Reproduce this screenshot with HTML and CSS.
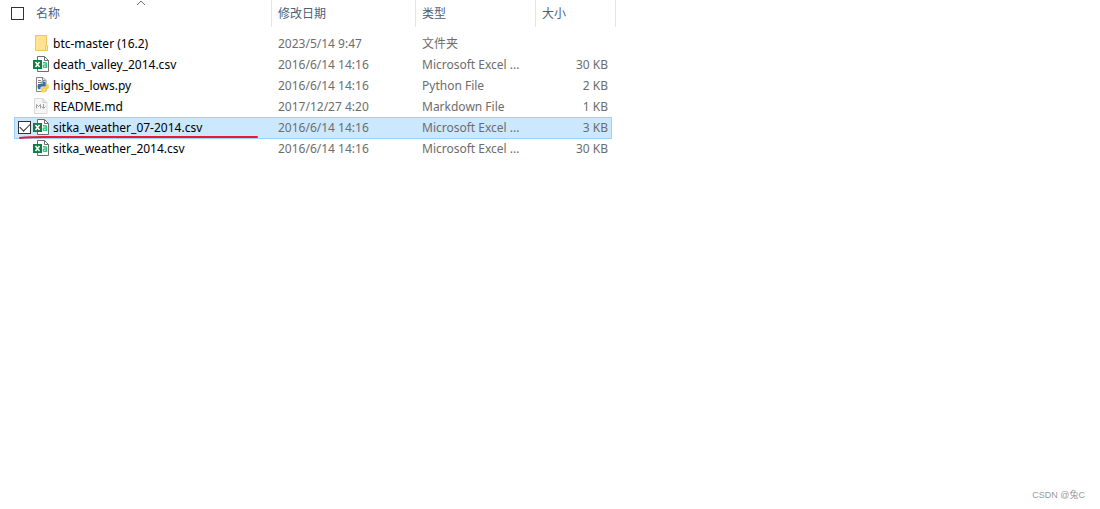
FILE: index.html
```
<!DOCTYPE html>
<html lang="zh-CN">
<head>
  <meta charset="UTF-8" />
  <title>文件列表</title>
  <meta name="viewport" content="width=device-width, initial-scale=1" />
  <link rel="stylesheet" href="styles.css">
</head>
<body>
  <svg class="sprite" aria-hidden="true">
    <symbol id="icon-folder" viewBox="0 0 16 16">
      <path d="M2.500.5h11v15h-11z" fill="#ffe391" stroke="#edc85c" />
      <path d="M12.500 15.500v-5h2v5z" fill="#ffe9a6" stroke="#edc85c" />
    </symbol>
    <symbol id="icon-csv" viewBox="0 0 16 16">
      <path d="M4.500.5h7l4 4v11h-11z" fill="#fff" stroke="#6d6d6d" />
      <path d="M11.500.5v4h4" fill="none" stroke="#6d6d6d" />
      <path d="M10 6.700h2.200q1.300 0 1.300 1.300v4M13.500 9h-2q-1.300 0-1.300 1.200t1.300 1.200q1.500 0 2-1" fill="none" stroke="#33c481" stroke-width="1.400" />
      <path d="M0 4h9v9H0z" fill="#107c41" />
      <path d="M2.500 6l4 5M6.500 6l-4 5" stroke="#fff" stroke-width="1.500" />
    </symbol>
    <symbol id="icon-python" viewBox="0 0 16 16">
      <path d="M3.500.5h6.500l3 3v11H3.500z" fill="#fff" stroke="#858585" />
      <path d="M9.500.5v3h3M5 3.500h3M5 5.500h3M5 7.500h2M5 11.500h2" fill="none" stroke="#858585" />
      <path d="M7.500 6q0-1.700 2.500-1.700T12.600 6v2.500q0 1-1 1H8.700q-1.200 0-1.200 1.500v1.200H6Q4.500 12.200 4.500 9.500T6 7h4v-.5H7.500z" fill="#3471a5" />
      <path d="M13.300 7h1.200Q16 7 16 9.600t-1.500 2.600h-4v.5H13V14q0 1.700-2.500 1.700T8 14v-3q0-1 1-1h3q1.300 0 1.300-1.500z" fill="#ffd43b" />
      <circle cx="9" cy="5.600" r=".5" fill="#fff" />
      <circle cx="11.800" cy="14.200" r=".5" fill="#fff" />
    </symbol>
    <symbol id="icon-markdown" viewBox="0 0 16 16">
      <path d="M1.500.5H10l4 4v11H1.500z" fill="#f6f6f6" stroke="#dadada" />
      <path d="M10 .5v4h4" fill="#e9e9e9" stroke="#d0d0d0" />
      <path d="M3.500 10.500v-4l2 2 2-2v4M10.500 6v4M8.500 8.500l2 2 2-2" fill="none" stroke="#a0a0a0" />
    </symbol>
  </svg>

  <main class="explorer">
    <table class="file-list">
      <thead>
        <tr class="head-row">
          <th class="head-name">
            <input type="checkbox" class="tick" id="selectAll" aria-label="全选" />
            <button type="button" class="sort-btn">名称</button>
            <svg class="sort-arrow" viewBox="0 0 10 6" aria-hidden="true"><path d="M1 5l4-4 4 4" /></svg>
          </th>
          <th><button type="button" class="sort-btn">修改日期</button></th>
          <th><button type="button" class="sort-btn">类型</button></th>
          <th><button type="button" class="sort-btn">大小</button></th>
        </tr>
      </thead>
      <tbody>
        <tr class="file-row">
          <td class="name">
            <input type="checkbox" class="tick" id="file1" />
            <svg class="icon" aria-hidden="true"><use href="#icon-folder" /></svg>
            <label for="file1">btc-master (16.2)</label>
          </td>
          <td>2023/5/14 9:47</td>
          <td>文件夹</td>
          <td class="size"></td>
        </tr>
        <tr class="file-row">
          <td class="name">
            <input type="checkbox" class="tick" id="file2" />
            <svg class="icon" aria-hidden="true"><use href="#icon-csv" /></svg>
            <label for="file2">death_valley_2014.csv</label>
          </td>
          <td>2016/6/14 14:16</td>
          <td>Microsoft Excel ...</td>
          <td class="size">30 KB</td>
        </tr>
        <tr class="file-row">
          <td class="name">
            <input type="checkbox" class="tick" id="file3" />
            <svg class="icon" aria-hidden="true"><use href="#icon-python" /></svg>
            <label for="file3">highs_lows.py</label>
          </td>
          <td>2016/6/14 14:16</td>
          <td>Python File</td>
          <td class="size">2 KB</td>
        </tr>
        <tr class="file-row">
          <td class="name">
            <input type="checkbox" class="tick" id="file4" />
            <svg class="icon" aria-hidden="true"><use href="#icon-markdown" /></svg>
            <label for="file4">README.md</label>
          </td>
          <td>2017/12/27 4:20</td>
          <td>Markdown File</td>
          <td class="size">1 KB</td>
        </tr>
        <tr class="file-row">
          <td class="name">
            <input type="checkbox" class="tick" id="file5" checked />
            <svg class="icon" aria-hidden="true"><use href="#icon-csv" /></svg>
            <label for="file5">sitka_weather_07-2014.csv</label>
            <svg class="underline" viewBox="0 0 240 4" aria-hidden="true"><path d="M1 3Q12 1.800 30 2T238 2" /></svg>
          </td>
          <td>2016/6/14 14:16</td>
          <td>Microsoft Excel ...</td>
          <td class="size">3 KB</td>
        </tr>
        <tr class="file-row">
          <td class="name">
            <input type="checkbox" class="tick" id="file6" />
            <svg class="icon" aria-hidden="true"><use href="#icon-csv" /></svg>
            <label for="file6">sitka_weather_2014.csv</label>
          </td>
          <td>2016/6/14 14:16</td>
          <td>Microsoft Excel ...</td>
          <td class="size">30 KB</td>
        </tr>
      </tbody>
    </table>
  </main>
  <footer class="watermark">CSDN @兔C</footer>
</body>
</html>
```
FILE: styles.css
```
* { box-sizing: border-box; }
body {
  margin: 0; min-height: 100vh; display: flex; flex-direction: column;
  background: #fff; color: #6d6d6d;
  font: 12px/20px "Noto Sans", "Noto Sans CJK SC", sans-serif;
}
.sprite { display: none; }
.explorer { flex: 1; }

.file-list { display: block; max-width: 616px; }
.file-list thead, .file-list tbody { display: block; }
.file-list tr { display: grid; }
.file-list th, .file-list td { padding: 0; font-weight: normal; text-align: left; white-space: nowrap; }

/* header */
.head-row { grid-template-columns: minmax(0, 1fr) 144px 120px 80px; }
.head-row th { height: 27px; padding: 0 6px; display: flex; align-items: center; border-right: 1px solid #e5e5e5; }
.head-row .head-name { position: relative; padding-left: 11px; gap: 12px; }
.sort-btn { border: none; background: none; padding: 0; font: inherit; color: #4c607a; cursor: pointer; }
.sort-arrow { position: absolute; top: 0; left: 50%; width: 10px; height: 6px; fill: none; stroke: #6d6d6d; }

/* files */
.file-list tbody { padding: 6px 4px 0 14px; }
.file-row { grid-template-columns: minmax(0, 1fr) 144px 120px 76px; margin-bottom: -1px; border: 1px solid transparent; }
.file-list .file-row td { padding: 0 7px; }
.file-list .file-row .name { position: relative; display: flex; align-items: flex-start; padding: 0 0 0 3px; color: #000; }
.file-list .file-row .size { padding: 0 3px; text-align: right; }
.file-row:has(.tick:checked) { background: #cce8ff; border-color: #99d1ff; }
.icon { width: 16px; height: 16px; margin: 1px 4px 0 2px; }

.tick { appearance: none; flex: none; width: 13px; height: 13px; margin: 0; border: 1px solid #333; background: #fff; }
.file-row .tick { margin-top: 3px; opacity: 0; }
.file-row:hover .tick, .file-row .tick:checked { opacity: 1; }
.tick:checked { display: grid; place-items: center; }
.tick:checked::before { content: ""; width: 9px; height: 5px; margin-bottom: 3px; border: solid #333; border-width: 0 0 1px 1px; transform: rotate(-45deg); }

/* hand-drawn marker line */
.underline { position: absolute; left: 4px; bottom: -1px; width: 240px; height: 4px; fill: none; stroke: #e81c2e; stroke-width: 2; stroke-linecap: round; pointer-events: none; }

.watermark { padding: 0 15px 4px; text-align: right; font-family: "Liberation Sans", "Noto Sans CJK SC", sans-serif; font-size: 9px; color: #999; }
```
